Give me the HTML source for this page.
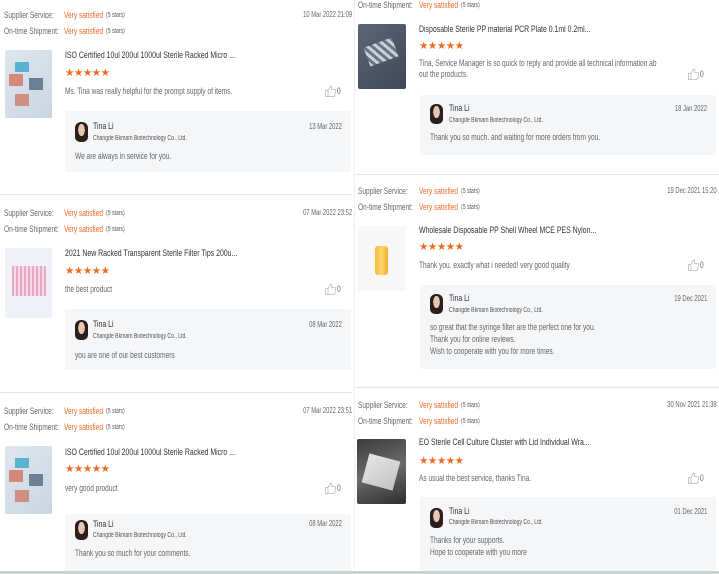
<!DOCTYPE html>
<html><head><meta charset="utf-8">
<style>
*{margin:0;padding:0;box-sizing:border-box}
body{width:719px;height:574px;overflow:hidden;background:#fff;font-family:"Liberation Sans",sans-serif;position:relative}
.t{position:absolute;white-space:nowrap;font-size:9px;line-height:11px;color:#666;transform:scaleX(.73);transform-origin:0 50%}
.r{transform-origin:100% 50%;text-align:right}
.o{color:#f06a2a}
.s{font-size:7px;color:#555}
.ti{color:#333;font-size:9.5px}
.st{position:absolute;color:#f06a1e;font-size:10.5px;letter-spacing:-0.5px;line-height:12px}
.box{position:absolute;background:#f5f6f8;border-radius:2px}
.img{position:absolute;border-radius:2px}
.av{position:absolute;width:13px;height:20px;border-radius:6px 6px 5px 5px;background:radial-gradient(ellipse at 50% 40%,#e8c7b0 0 35%,#2a1f1c 37%)}
.sep{position:absolute;height:1px;background:#e6e6e6}
.th{position:absolute;width:11px;height:12px}
</style></head><body>
<svg width="0" height="0" style="position:absolute"><defs><symbol id="tu" viewBox="0 0 11 12"><path d="M0.5 5.5h2.5v6H0.5zM3 5.5L5.5 1c1 0 1.5.6 1.3 1.6L6.5 4.5h3.2c.6 0 1 .5.9 1.1l-.8 5.2c-.1.5-.5.7-1 .7H3" fill="none" stroke="#bbb" stroke-width=".8"/></symbol></defs></svg>

<!-- LEFT column -->
<div class="t" style="left:4px;top:10px">Supplier Service:</div>
<div class="t o" style="left:64px;top:10px">Very satisfied</div>
<div class="t s" style="left:106px;top:10px">(5 stars)</div>
<div class="t r" style="right:367px;top:9px;font-size:8px">10 Mar 2022 21:09</div>
<div class="t" style="left:4px;top:26px">On-time Shipment:</div>
<div class="t o" style="left:64px;top:26px">Very satisfied</div>
<div class="t s" style="left:106px;top:26px">(5 stars)</div>
<div class="img" style="left:5px;top:50px;width:47px;height:68px;background:linear-gradient(135deg,#dfe6ee,#c9d6e2);"><div style="position:absolute;left:10px;top:12px;width:14px;height:10px;background:#5ab2d0"></div><div style="position:absolute;left:4px;top:24px;width:14px;height:12px;background:#d38a7a"></div><div style="position:absolute;left:24px;top:28px;width:14px;height:12px;background:#6d7f95"></div><div style="position:absolute;left:10px;top:44px;width:14px;height:12px;background:#cf8f82"></div></div>
<div class="t ti" style="left:65px;top:50px">ISO Certified 10ul 200ul 1000ul Sterile Racked Micro ...</div>
<div class="st" style="left:65px;top:67px">★★★★★</div>
<div class="t" style="left:65px;top:86px">Ms. Tina was really helpful for the prompt supply of items.</div>
<svg class="th" style="left:325px;top:85px"><use href="#tu"/></svg>
<div class="box" style="left:65px;top:111px;width:286px;height:61px"></div>
<div class="av" style="left:75px;top:122px"></div>
<div class="t ti" style="left:93px;top:121px">Tina Li</div>
<div class="t s" style="left:93px;top:133px">Changde Bkmam Biotechnology Co., Ltd.</div>
<div class="t r" style="right:377px;top:121px;font-size:8px">13 Mar 2022</div>
<div class="t" style="left:75px;top:151px">We are always in service for you.</div>
<div class="sep" style="left:0;top:194px;width:352px"></div>

<div class="t" style="left:4px;top:208px">Supplier Service:</div>
<div class="t o" style="left:64px;top:208px">Very satisfied</div>
<div class="t s" style="left:106px;top:208px">(5 stars)</div>
<div class="t r" style="right:367px;top:207px;font-size:8px">07 Mar 2022 23:52</div>
<div class="t" style="left:4px;top:224px">On-time Shipment:</div>
<div class="t o" style="left:64px;top:224px">Very satisfied</div>
<div class="t s" style="left:106px;top:224px">(5 stars)</div>
<div class="img" style="left:5px;top:248px;width:47px;height:70px;background:#eef1f6"><div style="position:absolute;left:7px;top:18px;width:34px;height:30px;background:repeating-linear-gradient(90deg,#e9a9c4 0 2px,#f6dbe6 2px 4px)"></div></div>
<div class="t ti" style="left:65px;top:248px">2021 New Racked Transparent Sterile Filter Tips 200u...</div>
<div class="st" style="left:65px;top:265px">★★★★★</div>
<div class="t" style="left:65px;top:284px">the best product</div>
<svg class="th" style="left:325px;top:283px"><use href="#tu"/></svg>
<div class="box" style="left:65px;top:309px;width:286px;height:61px"></div>
<div class="av" style="left:75px;top:320px"></div>
<div class="t ti" style="left:93px;top:319px">Tina Li</div>
<div class="t s" style="left:93px;top:331px">Changde Bkmam Biotechnology Co., Ltd.</div>
<div class="t r" style="right:377px;top:319px;font-size:8px">08 Mar 2022</div>
<div class="t" style="left:75px;top:350px">you are one of our best customers</div>
<div class="sep" style="left:0;top:392px;width:352px"></div>

<div class="t" style="left:4px;top:406px">Supplier Service:</div>
<div class="t o" style="left:64px;top:406px">Very satisfied</div>
<div class="t s" style="left:106px;top:406px">(5 stars)</div>
<div class="t r" style="right:367px;top:405px;font-size:8px">07 Mar 2022 23:51</div>
<div class="t" style="left:4px;top:422px">On-time Shipment:</div>
<div class="t o" style="left:64px;top:422px">Very satisfied</div>
<div class="t s" style="left:106px;top:422px">(5 stars)</div>
<div class="img" style="left:5px;top:446px;width:47px;height:68px;background:linear-gradient(135deg,#dfe6ee,#c9d6e2);"><div style="position:absolute;left:10px;top:12px;width:14px;height:10px;background:#5ab2d0"></div><div style="position:absolute;left:4px;top:24px;width:14px;height:12px;background:#d38a7a"></div><div style="position:absolute;left:24px;top:28px;width:14px;height:12px;background:#6d7f95"></div><div style="position:absolute;left:10px;top:44px;width:14px;height:12px;background:#cf8f82"></div></div>
<div class="t ti" style="left:65px;top:447px">ISO Certified 10ul 200ul 1000ul Sterile Racked Micro ...</div>
<div class="st" style="left:65px;top:463px">★★★★★</div>
<div class="t" style="left:65px;top:483px">very good product</div>
<svg class="th" style="left:325px;top:482px"><use href="#tu"/></svg>
<div class="box" style="left:65px;top:514px;width:286px;height:58px"></div>
<div class="av" style="left:75px;top:520px"></div>
<div class="t ti" style="left:93px;top:519px">Tina Li</div>
<div class="t s" style="left:93px;top:530px">Changde Bkmam Biotechnology Co., Ltd.</div>
<div class="t r" style="right:377px;top:518px;font-size:8px">08 Mar 2022</div>
<div class="t" style="left:75px;top:548px">Thank you so much for your comments.</div>

<!-- RIGHT column -->
<div style="position:absolute;left:354px;top:0;width:365px;height:572px;background:#fff;border-left:1px solid #f0f0f0"></div>
<div class="t" style="left:358px;top:0px">On-time Shipment:</div>
<div class="t o" style="left:419px;top:0px">Very satisfied</div>
<div class="t s" style="left:461px;top:0px">(5 stars)</div>
<div class="img" style="left:358px;top:24px;width:48px;height:65px;background:linear-gradient(135deg,#5b6676,#3e4856)"><div style="position:absolute;left:8px;top:18px;width:30px;height:20px;background:repeating-linear-gradient(60deg,#c9d0d8 0 3px,#6a7482 3px 6px);transform:rotate(-20deg)"></div></div>
<div class="t ti" style="left:419px;top:24px">Disposable Sterile PP material PCR Plate 0.1ml 0.2ml...</div>
<div class="st" style="left:419px;top:40px">★★★★★</div>
<div class="t" style="left:419px;top:58px">Tina, Service Manager is so quick to reply and provide all technical information ab</div>
<div class="t" style="left:419px;top:69px">out the products.</div>
<svg class="th" style="left:688px;top:68px"><use href="#tu"/></svg>
<div class="box" style="left:420px;top:95px;width:296px;height:60px"></div>
<div class="av" style="left:430px;top:104px"></div>
<div class="t ti" style="left:449px;top:103px">Tina Li</div>
<div class="t s" style="left:449px;top:115px">Changde Bkmam Biotechnology Co., Ltd.</div>
<div class="t r" style="right:12px;top:103px;font-size:8px">18 Jan 2022</div>
<div class="t" style="left:430px;top:132px">Thank you so much. and waiting for more orders from you.</div>
<div class="sep" style="left:355px;top:174px;width:364px"></div>

<div class="t" style="left:358px;top:186px">Supplier Service:</div>
<div class="t o" style="left:419px;top:186px">Very satisfied</div>
<div class="t s" style="left:461px;top:186px">(5 stars)</div>
<div class="t r" style="right:2px;top:185px;font-size:8px">19 Dec 2021 15:20</div>
<div class="t" style="left:358px;top:202px">On-time Shipment:</div>
<div class="t o" style="left:419px;top:202px">Very satisfied</div>
<div class="t s" style="left:461px;top:202px">(5 stars)</div>
<div class="img" style="left:358px;top:226px;width:48px;height:65px;background:#f7f7f7"><div style="position:absolute;left:17px;top:20px;width:13px;height:29px;border-radius:3px;background:linear-gradient(90deg,#f3b93a,#fcd870,#f0b030)"></div></div>
<div class="t ti" style="left:419px;top:225px">Wholesale Disposable PP Shell Wheel MCE PES Nylon...</div>
<div class="st" style="left:419px;top:241px">★★★★★</div>
<div class="t" style="left:419px;top:260px">Thank you. exactly what i needed! very good quality</div>
<svg class="th" style="left:688px;top:259px"><use href="#tu"/></svg>
<div class="box" style="left:420px;top:285px;width:296px;height:84px"></div>
<div class="av" style="left:430px;top:294px"></div>
<div class="t ti" style="left:449px;top:293px">Tina Li</div>
<div class="t s" style="left:449px;top:305px">Changde Bkmam Biotechnology Co., Ltd.</div>
<div class="t r" style="right:12px;top:293px;font-size:8px">19 Dec 2021</div>
<div class="t" style="left:430px;top:322px">so great that the syringe filter are the perfect one for you.</div>
<div class="t" style="left:430px;top:334px">Thank you for online reviews.</div>
<div class="t" style="left:430px;top:346px">Wish to cooperate with you for more times.</div>
<div class="sep" style="left:355px;top:387px;width:364px"></div>

<div class="t" style="left:358px;top:400px">Supplier Service:</div>
<div class="t o" style="left:419px;top:400px">Very satisfied</div>
<div class="t s" style="left:461px;top:400px">(5 stars)</div>
<div class="t r" style="right:2px;top:399px;font-size:8px">30 Nov 2021 21:38</div>
<div class="t" style="left:358px;top:416px">On-time Shipment:</div>
<div class="t o" style="left:419px;top:416px">Very satisfied</div>
<div class="t s" style="left:461px;top:416px">(5 stars)</div>
<div class="img" style="left:357px;top:439px;width:49px;height:65px;background:linear-gradient(160deg,#3c3c3c,#6a6a6a 50%,#2e2e2e)"><div style="position:absolute;left:8px;top:18px;width:32px;height:30px;background:linear-gradient(135deg,#f4f4f4,#cfcfcf);transform:rotate(15deg);opacity:.9"></div></div>
<div class="t ti" style="left:419px;top:437px">EO Sterile Cell Culture Cluster with Lid Individual Wra...</div>
<div class="st" style="left:419px;top:455px">★★★★★</div>
<div class="t" style="left:419px;top:473px">As usual the best service, thanks Tina.</div>
<svg class="th" style="left:688px;top:472px"><use href="#tu"/></svg>
<div class="box" style="left:420px;top:497px;width:296px;height:74px"></div>
<div class="av" style="left:430px;top:508px"></div>
<div class="t ti" style="left:449px;top:506px">Tina Li</div>
<div class="t s" style="left:449px;top:517px">Changde Bkmam Biotechnology Co., Ltd.</div>
<div class="t r" style="right:12px;top:506px;font-size:8px">01 Dec 2021</div>
<div class="t" style="left:430px;top:535px">Thanks for your supports.</div>
<div class="t" style="left:430px;top:547px">Hope to cooperate with you more</div>

<div style="position:absolute;left:0;top:571px;width:719px;height:3px;background:#c9d3d0"></div>

<!-- like counts -->
<div class="t" style="left:337px;top:86px">0</div>
<div class="t" style="left:337px;top:284px">0</div>
<div class="t" style="left:337px;top:483px">0</div>
<div class="t" style="left:700px;top:69px">0</div>
<div class="t" style="left:700px;top:260px">0</div>
<div class="t" style="left:700px;top:473px">0</div>
</body></html>
